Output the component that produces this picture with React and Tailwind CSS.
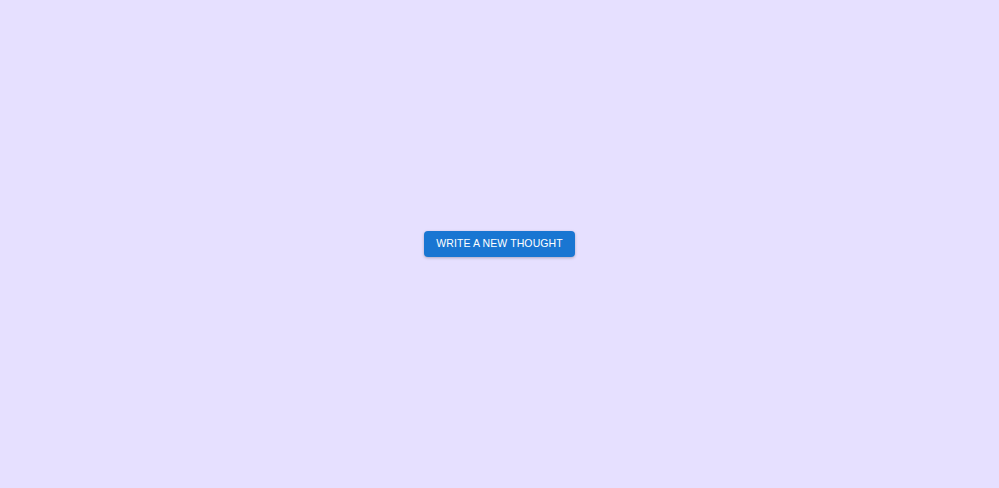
import React from 'react';

const App = () => {
  return (
    <div className="flex items-center justify-center w-full h-[488px] bg-[#e6e0ff]">
      <button
        type="button"
        className="h-[26px] px-3 rounded-[4px] bg-[#1976d2] text-white text-[10.5px] uppercase tracking-[0.01em] shadow-[0_1px_3px_rgba(0,0,0,0.25)] font-['Liberation_Sans',Arial,sans-serif]"
      >
        Write a new thought
      </button>
    </div>
  );
};

export default App;
